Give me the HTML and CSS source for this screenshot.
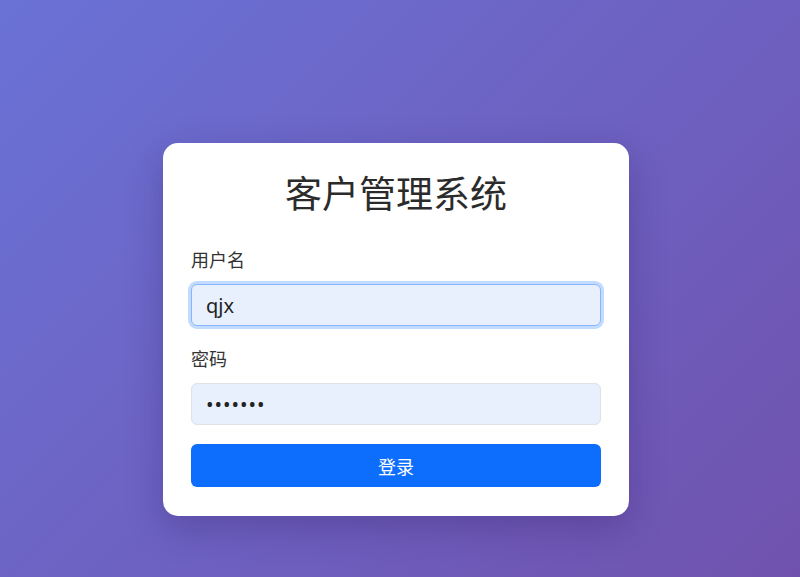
FILE: index.html
```html
<!DOCTYPE html>
<html lang="zh-CN">
<head>
  <meta charset="UTF-8">
  <meta name="viewport" content="width=device-width, initial-scale=1.0">
  <title>客户管理系统</title>
  <link rel="stylesheet" href="styles.css">
</head>

<body>
  <div class="page">
    <form class="login-card">
      <h2 class="title">客户管理系统</h2>
      <div class="field">
        <label for="username">用户名</label>
        <input type="text" id="username" class="input focus" value="qjx">
      </div>
      <div class="field">
        <label for="password">密码</label>
        <input type="password" id="password" class="input" value="1234567">
      </div>
      <button type="button" class="btn">登录</button>
    </form>
  </div>
</body>
</html>
```

FILE: styles.css
```css
*{
  margin: 0;
  padding: 0;
  box-sizing: border-box;
}
html, body{
  height: 100%;
}
body{
  font-family: "Noto Sans", "Noto Sans CJK SC", sans-serif;
  color: #212529;
  background: linear-gradient(135deg, #6a72d6 0%, #7052ae 100%);
}
.page{
  height: 100%;
  display: flex;
  justify-content: center;
  align-items: flex-start;
  padding-top: 143px;
  padding-right: 8px;
}
.login-card{
  width: 466px;
  background: #fff;
  border-radius: 15px;
  padding: 29px 28px 29px;
  box-shadow: 0 12px 36px rgba(40, 20, 90, 0.28);
}
.title{
  font-size: 37px;
  font-weight: 400;
  line-height: 43px;
  text-align: center;
  color: #2b2b2b;
  margin-bottom: 32px;
}
.field{
  margin-bottom: 20px;
}
.field label{
  display: block;
  font-size: 18px;
  line-height: 27px;
  color: #333;
  margin-bottom: 10px;
}
.input{
  display: block;
  width: 100%;
  height: 42px;
  padding: 0 14px;
  font-family: inherit;
  font-size: 20px;
  color: #222;
  background: #e8f0fe;
  border: 1px solid #dee2e6;
  border-radius: 6px;
  outline: none;
}
.input.focus{
  border-color: #86b7fe;
  box-shadow: 0 0 0 3px rgba(13, 110, 253, 0.25);
}
input[type="password"]{
  letter-spacing: 1px;
}
.btn{
  display: block;
  width: 100%;
  height: 43px;
  margin-top: -1px;
  font-family: inherit;
  font-size: 18px;
  color: #fff;
  background: #0d6efd;
  border: none;
  border-radius: 6px;
  cursor: pointer;
}
```
